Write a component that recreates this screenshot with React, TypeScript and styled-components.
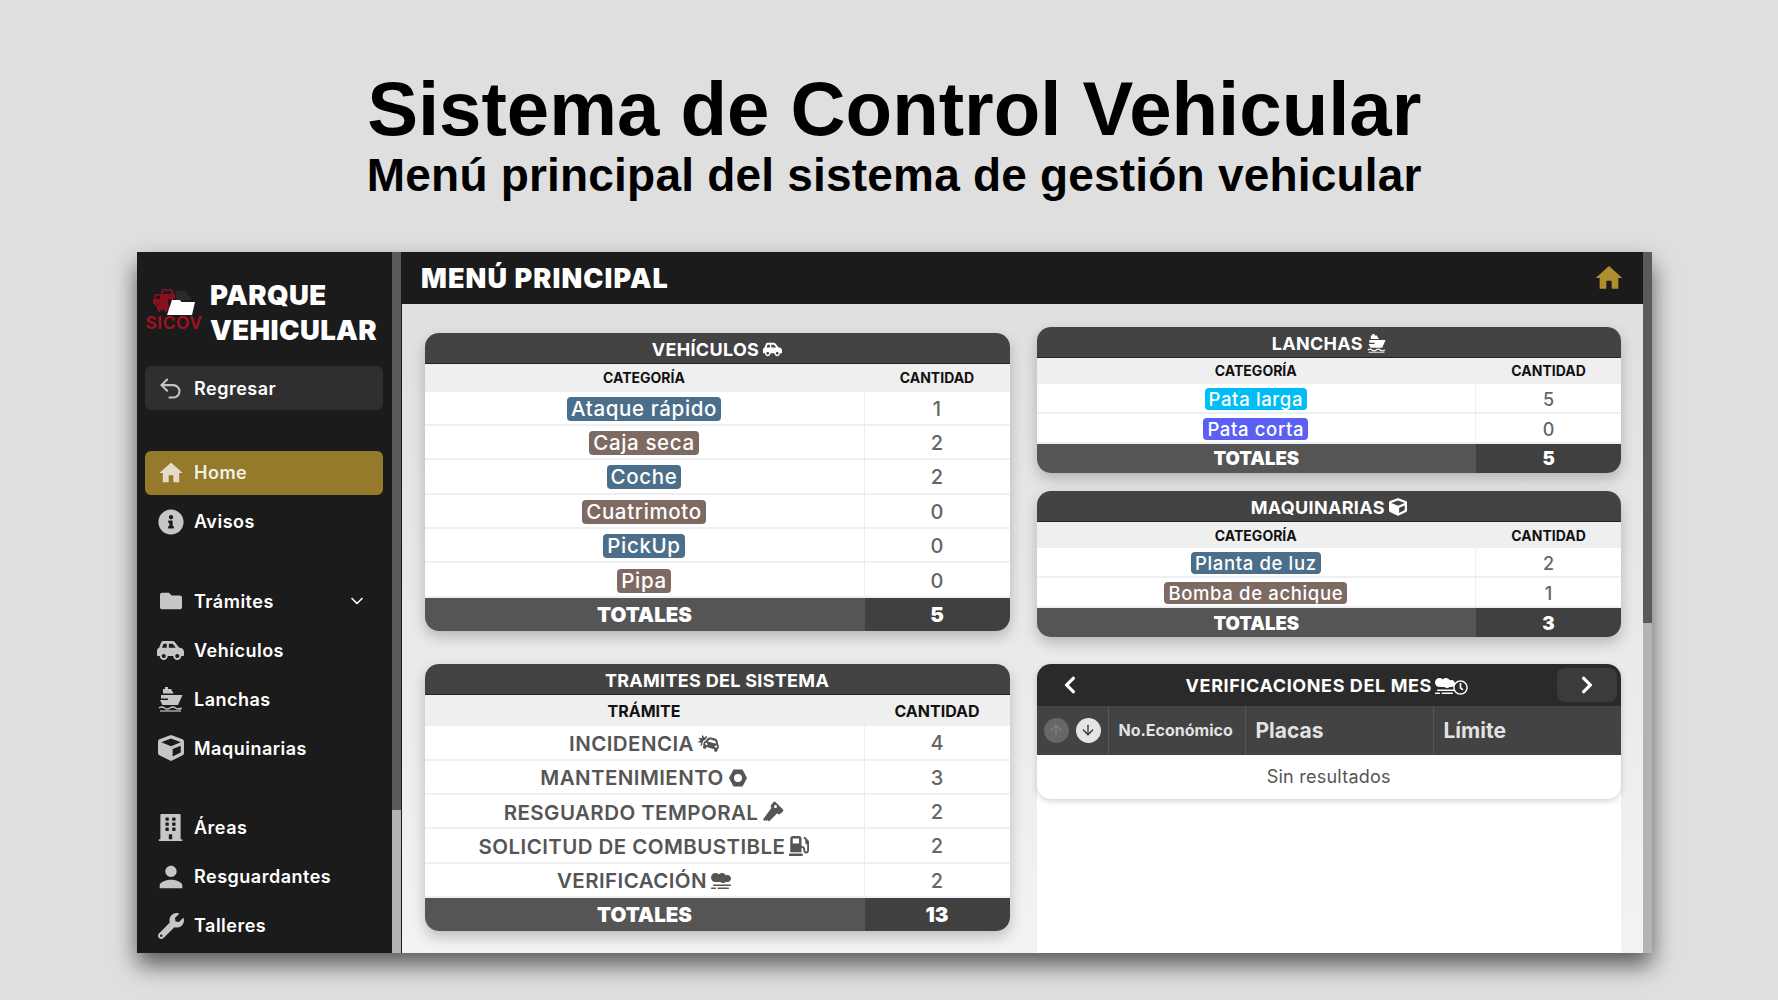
import React from "react";
import styled, { createGlobalStyle } from "styled-components";
import { FaInfoCircle, FaFolder, FaCarSide, FaCube, FaBuilding, FaWrench, FaCarCrash, FaGasPump, FaSmog, FaRegClock, FaChevronLeft, FaChevronRight } from "react-icons/fa";
import { MdHome, MdPerson } from "react-icons/md";
import { Undo2, ChevronDown, ArrowUp, ArrowDown } from "lucide-react";

const Global = createGlobalStyle`
  html, body { margin: 0; padding: 0; background: #dfdfdf; }
  body { font-family: "Inter", "Liberation Sans", sans-serif; overflow: hidden; }
  svg { flex: none; }
`;

const Page = styled.div`
  width: 1778px;
  height: 1000px;
  box-sizing: border-box;
  padding: 0 126px 0 136.5px;
  display: flex;
  flex-direction: column;
`;

const Hero = styled.header`
  height: 252px;
  display: flex;
  flex-direction: column;
  align-items: center;
  padding-top: 67px;
  box-sizing: border-box;
  font-family: "Liberation Sans", Arial, sans-serif;
  font-weight: 700;
  color: #000;
`;
const HeroTitle = styled.h1`
  margin: 0;
  font-size: 76.2px;
  line-height: 84px;
  font-weight: 700;
`;
const HeroSub = styled.h2`
  margin: -2px 0 0;
  font-size: 46px;
  line-height: 52px;
  font-weight: 700;
  letter-spacing: 0.2px;
`;

const Frame = styled.div`
  height: 701px;
  display: flex;
  background: #1b1b1b;
  box-shadow: 0 12px 22px rgba(0, 0, 0, 0.6);
  overflow: hidden;
`;

const Sidebar = styled.aside`
  width: 255px;
  flex: none;
  box-sizing: border-box;
  padding: 24px 8.5px 0;
  color: #fff;
  display: flex;
  flex-direction: column;
`;
const Brand = styled.div`
  display: flex;
  align-items: center;
  gap: 7px;
  height: 74px;
  margin-bottom: 16px;
`;
const Logo = styled.div`
  width: 58px;
  display: flex;
  flex-direction: column;
  align-items: center;
  margin-bottom: 8px;
`;
const LogoText = styled.span`
  font-size: 17.5px;
  line-height: 15px;
  font-weight: 600;
  letter-spacing: 0.5px;
  color: #a80f20;
`;
const BrandName = styled.div`
  font-size: 27.5px;
  line-height: 35.5px;
  font-weight: 900;
  letter-spacing: 0.4px;
`;
const NavGroup = styled.nav<{ $gap: number }>`
  display: flex;
  flex-direction: column;
  gap: 5px;
  margin-bottom: ${(p) => p.$gap}px;
`;
const NavItem = styled.div<{ $variant?: "back" | "active" }>`
  height: 44px;
  box-sizing: border-box;
  padding: 0 16px 0 12px;
  border-radius: 6px;
  display: flex;
  align-items: center;
  gap: 10px;
  font-size: 18px;
  font-weight: 600;
  letter-spacing: 0.5px;
  color: ${(p) => (p.$variant === "active" ? "#f1efe8" : "#fff")};
  background: ${(p) => (p.$variant === "active" ? "#957a2b" : p.$variant === "back" ? "#2f2f2f" : "transparent")};
`;
const NavIcon = styled.span<{ $tint?: string }>`
  width: 27px;
  height: 27px;
  flex: none;
  display: flex;
  align-items: center;
  justify-content: center;
  color: ${(p) => p.$tint || "#c6c6c6"};
`;
const NavLabel = styled.span`
  flex: 1;
`;

const ScrollTrack = styled.div<{ $thumb: number; $w: number }>`
  width: ${(p) => p.$w}px;
  flex: none;
  display: flex;
  flex-direction: column;
  background: #b3b3b3;
  &::before {
    content: "";
    display: block;
    height: ${(p) => p.$thumb}px;
    background: #5a5a5a;
  }
`;

const Main = styled.main`
  flex: 1;
  min-width: 0;
  margin-left: 1px;
  display: flex;
  flex-direction: column;
  background: linear-gradient(#dedede, #f3f3f3);
`;
const TopBar = styled.div`
  height: 52px;
  flex: none;
  background: #1b1b1b;
  color: #fff;
  display: flex;
  align-items: center;
  justify-content: space-between;
  padding: 0 18px 0 19px;
`;
const TopTitle = styled.h3`
  margin: 0;
  font-size: 27px;
  font-weight: 900;
  letter-spacing: 1.1px;
`;
const Columns = styled.div`
  flex: 1;
  min-height: 0;
  display: grid;
  grid-template-columns: 585px 584.5px;
  column-gap: 27px;
  padding: 0 22px 0 22.5px;
`;
const Column = styled.div<{ $top: number }>`
  display: flex;
  flex-direction: column;
  padding-top: ${(p) => p.$top}px;
  min-height: 0;
`;

const Card = styled.section<{ $after: number }>`
  border-radius: 14px;
  overflow: hidden;
  background: #fff;
  box-shadow: 0 6px 14px rgba(0, 0, 0, 0.22);
  margin-bottom: ${(p) => p.$after}px;
  flex: none;
`;
const CardTitle = styled.div<{ $h: number }>`
  height: ${(p) => p.$h}px;
  box-sizing: border-box;
  padding-top: 2px;
  background: #434343;
  color: #fff;
  display: flex;
  align-items: center;
  justify-content: center;
  gap: 4px;
  font-size: 18px;
  font-weight: 700;
  letter-spacing: 0.3px;
  box-shadow: inset 0 -1px 0 #222;
`;
const Row = styled.div<{ $h: number }>`
  height: ${(p) => p.$h}px;
  display: grid;
  grid-template-columns: 440fr 145fr;
`;
const Cell = styled.div`
  display: flex;
  align-items: center;
  justify-content: center;
  gap: 4px;
  padding-top: 2px;
  border-bottom: 2px solid #eef0f4;
  box-sizing: border-box;
  &:first-child {
    border-right: 1px solid #eceef2;
  }
`;
const HeadCell = styled(Cell)<{ $size: number }>`
  background: #efefef;
  color: #111;
  font-weight: 700;
  font-size: ${(p) => p.$size}px;
  padding-top: 0;
  border-bottom: 0;
`;
const Count = styled(Cell)<{ $size: number }>`
  color: #666;
  font-size: ${(p) => p.$size}px;
  font-weight: 500;
`;
const NameCell = styled(Cell)`
  color: #555;
  font-size: 20.5px;
  font-weight: 600;
  letter-spacing: 0.43px;
`;
const Badge = styled.span<{ $bg: string; $size: number; $pad: number }>`
  background: ${(p) => p.$bg};
  color: #fff;
  border-radius: 4px;
  padding: 0 ${(p) => p.$pad}px;
  font-size: ${(p) => p.$size}px;
  font-weight: 500;
  letter-spacing: 0.65px;
  line-height: ${(p) => p.$size + 3.5}px;
`;
const TotalRow = styled.div<{ $h: number; $size: number }>`
  height: ${(p) => p.$h}px;
  display: grid;
  grid-template-columns: 440fr 145fr;
  color: #fff;
  font-weight: 900;
  font-size: ${(p) => p.$size}px;
  box-shadow: inset 0 1px 0 #2a2a2a;
`;
const TotalLabel = styled.div`
  background: #555;
  display: flex;
  align-items: center;
  justify-content: center;
`;
const TotalValue = styled(TotalLabel)`
  background: #404040;
`;

const VerifWrap = styled.div`
  flex: 1;
  min-height: 0;
  background: #fff;
  border-radius: 14px 14px 0 0;
`;
const VerifCard = styled.section`
  border-radius: 14px;
  overflow: hidden;
  background: #fff;
  box-shadow: 0 2px 6px rgba(0, 0, 0, 0.18);
`;
const VerifTop = styled.div`
  height: 42px;
  background: #2a2a2a;
  color: #fff;
  display: flex;
  align-items: center;
  padding: 0 4px 0 24px;
`;
const VerifTitle = styled.div`
  flex: 1;
  display: flex;
  align-items: center;
  justify-content: center;
  gap: 3px;
  font-size: 18px;
  font-weight: 700;
  letter-spacing: 0.6px;
  padding: 2px 0 0 18px;
`;
const ClockMark = styled.span`
  display: flex;
  margin: 4px 0 0 -5px;
`;
const PagerButton = styled.button<{ $filled?: boolean }>`
  width: ${(p) => (p.$filled ? 60 : 18)}px;
  height: 34px;
  padding: 0;
  border: 0;
  border-radius: 8px;
  color: #fff;
  background: ${(p) => (p.$filled ? "#3b3b3b" : "transparent")};
  display: flex;
  align-items: center;
  justify-content: center;
`;
const VerifHead = styled.div`
  height: 49px;
  display: grid;
  grid-template-columns: 72px 137px 188px 1fr;
  background: #434343;
  color: #e2e2e2;
`;
const VerifCol = styled.div<{ $size: number }>`
  display: flex;
  align-items: center;
  padding-left: 10px;
  font-size: ${(p) => p.$size}px;
  font-weight: 700;
  border-right: 1px solid #575757;
  &:last-child {
    border-right: 0;
  }
`;
const SortCol = styled(VerifCol)`
  padding-left: 7px;
  gap: 7px;
`;
const SortDot = styled.span<{ $on?: boolean }>`
  width: 25px;
  height: 25px;
  border-radius: 50%;
  display: flex;
  align-items: center;
  justify-content: center;
  background: ${(p) => (p.$on ? "#e4e4e4" : "#676767")};
  color: ${(p) => (p.$on ? "#333" : "#808080")};
`;
const Empty = styled.div`
  height: 44px;
  display: flex;
  align-items: center;
  justify-content: center;
  color: #555;
  font-size: 18px;
  letter-spacing: 0.25px;
`;

const SicovMark = () => (
  <svg width="44" height="27" viewBox="0 0 44 27" aria-hidden="true">
    <path d="M24 3h10l2 5 3 1v3H24z" fill="#2a2a2a" />
    <g fill="#8a1020">
      <path d="M10 1h10l2 5h1v5h-2v2h-2v-2h-7v2h-2v-2H8V6h1zm1.500 1.500L10.500 6h9l-1-3.500z" />
      <path d="M3 6h10l2 5h1v5h-2v2h-2v-2H5v2H3v-2H1v-5h1zm1.500 1.500L3.500 11h9l-1-3.500z" />
      <path d="M7 14h8l2 4v4h-2v2h-2v-2H8v2H6v-2H5v-4z" />
    </g>
    <path d="M20 12h8l1.500 2H43l-3 13H15z" fill="#fff" />
  </svg>
);

const NutIcon = () => (
  <svg width="20" height="20" viewBox="0 0 20 20" aria-hidden="true">
    <path fillRule="evenodd" fill="#555" d="M5.500 1.500h9L19 10l-4.500 8.500h-9L1 10zM10 6a4 4 0 1 0 0 8 4 4 0 0 0 0-8z" />
  </svg>
);

const KeyIcon = () => (
  <svg width="22" height="22" viewBox="0 0 22 22" aria-hidden="true">
    <path
      fillRule="evenodd"
      fill="#555"
      d="M13.500 1 21 8.500a1.500 1.500 0 0 1 0 2L18 13a1.500 1.500 0 0 1-2 0l-.8-.8L7 20.500 5.500 19l-1 1-1-1-1 1L1 18.500 9.500 6.800 9 6.300a1.500 1.500 0 0 1 0-2L11.500 1a1.500 1.500 0 0 1 2 0zM13.500 4a1.500 1.500 0 1 0 0 3 1.500 1.500 0 0 0 0-3z"
    />
  </svg>
);

const BoatIcon = ({ size }: { size: number }) => (
  <svg width={size} height={size} viewBox="0 0 25 25" fill="currentColor" aria-hidden="true">
    <path d="M7 0h3v2h3l2.500 4.500H5V2h2z" />
    <path d="M3 8h21.500L20 18H4.500L2 13h8v-1.500H3z" />
    <path d="M1 21c2-1.600 3.500-1.600 5.500 0s3.500 1.600 5.500 0 3.500-1.600 5.500 0 3.500 1.600 6 0" fill="none" stroke="currentColor" strokeWidth="1.500" />
    <path d="M2 24h21" fill="none" stroke="currentColor" strokeWidth="1.200" />
  </svg>
);

const vehicles: [string, string, number][] = [
  ["Ataque rápido", "#4b6f8b", 1],
  ["Caja seca", "#7d6a63", 2],
  ["Coche", "#4b6f8b", 2],
  ["Cuatrimoto", "#7d6a63", 0],
  ["PickUp", "#4b6f8b", 0],
  ["Pipa", "#7d6a63", 0],
];

const tramites: [string, React.ReactNode, number][] = [
  ["INCIDENCIA", <FaCarCrash size={21} />, 4],
  ["MANTENIMIENTO", <NutIcon />, 3],
  ["RESGUARDO TEMPORAL", <KeyIcon />, 2],
  ["SOLICITUD DE COMBUSTIBLE", <FaGasPump size={20} />, 2],
  ["VERIFICACIÓN", <FaSmog size={20} />, 2],
];

const SmallTable = ({ title, icon, rows, total, after }: { title: string; icon: React.ReactNode; rows: [string, string, number][]; total: number; after: number }) => (
  <Card $after={after}>
    <CardTitle $h={31}>{title} {icon}</CardTitle>
    <Row $h={26.5}>
      <HeadCell $size={14}>CATEGORÍA</HeadCell>
      <HeadCell $size={14}>CANTIDAD</HeadCell>
    </Row>
    {rows.map(([name, bg, n]) => (
      <Row $h={30} key={name}>
        <Cell><Badge $bg={bg} $size={18.5} $pad={4}>{name}</Badge></Cell>
        <Count $size={18}>{n}</Count>
      </Row>
    ))}
    <TotalRow $h={28.5} $size={18.5}>
      <TotalLabel>TOTALES</TotalLabel>
      <TotalValue>{total}</TotalValue>
    </TotalRow>
  </Card>
);

export default function App() {
  return (
    <Page>
      <Global />
      <Hero>
        <HeroTitle>Sistema de Control Vehicular</HeroTitle>
        <HeroSub>Menú principal del sistema de gestión vehicular</HeroSub>
      </Hero>
      <Frame>
        <Sidebar>
          <Brand>
            <Logo>
              <SicovMark />
              <LogoText>SICOV</LogoText>
            </Logo>
            <BrandName>PARQUE<br />VEHICULAR</BrandName>
          </Brand>
          <NavGroup $gap={40.5}>
            <NavItem $variant="back">
              <NavIcon><Undo2 size={27} strokeWidth={1.8} /></NavIcon>
              <NavLabel>Regresar</NavLabel>
            </NavItem>
          </NavGroup>
          <NavGroup $gap={35.5}>
            <NavItem $variant="active">
              <NavIcon $tint="#e3dcc6"><MdHome size={28} /></NavIcon>
              <NavLabel>Home</NavLabel>
            </NavItem>
            <NavItem>
              <NavIcon><FaInfoCircle size={26} /></NavIcon>
              <NavLabel>Avisos</NavLabel>
            </NavItem>
          </NavGroup>
          <NavGroup $gap={35.5}>
            <NavItem>
              <NavIcon><FaFolder size={22} /></NavIcon>
              <NavLabel>Trámites</NavLabel>
              <ChevronDown size={20} strokeWidth={2} />
            </NavItem>
            <NavItem>
              <NavIcon><FaCarSide size={27} /></NavIcon>
              <NavLabel>Vehículos</NavLabel>
            </NavItem>
            <NavItem>
              <NavIcon><BoatIcon size={25} /></NavIcon>
              <NavLabel>Lanchas</NavLabel>
            </NavItem>
            <NavItem>
              <NavIcon><FaCube size={26} /></NavIcon>
              <NavLabel>Maquinarias</NavLabel>
            </NavItem>
          </NavGroup>
          <NavGroup $gap={0}>
            <NavItem>
              <NavIcon><FaBuilding size={27} /></NavIcon>
              <NavLabel>Áreas</NavLabel>
            </NavItem>
            <NavItem>
              <NavIcon><MdPerson size={34} /></NavIcon>
              <NavLabel>Resguardantes</NavLabel>
            </NavItem>
            <NavItem>
              <NavIcon><FaWrench size={26} /></NavIcon>
              <NavLabel>Talleres</NavLabel>
            </NavItem>
          </NavGroup>
        </Sidebar>
        <ScrollTrack $thumb={558} $w={9.5} />
        <Main>
          <TopBar>
            <TopTitle>MENÚ PRINCIPAL</TopTitle>
            <MdHome size={32} color="#b08e30" />
          </TopBar>
          <Columns>
            <Column $top={29}>
              <Card $after={33}>
                <CardTitle $h={31}>VEHÍCULOS <FaCarSide size={19} /></CardTitle>
                <Row $h={27.5}>
                  <HeadCell $size={14}>CATEGORÍA</HeadCell>
                  <HeadCell $size={14}>CANTIDAD</HeadCell>
                </Row>
                {vehicles.map(([name, bg, n]) => (
                  <Row $h={34.4} key={name}>
                    <Cell><Badge $bg={bg} $size={20.5} $pad={4}>{name}</Badge></Cell>
                    <Count $size={20}>{n}</Count>
                  </Row>
                ))}
                <TotalRow $h={33} $size={20.5}>
                  <TotalLabel>TOTALES</TotalLabel>
                  <TotalValue>5</TotalValue>
                </TotalRow>
              </Card>
              <Card $after={0}>
                <CardTitle $h={31}>TRAMITES DEL SISTEMA</CardTitle>
                <Row $h={31.5}>
                  <HeadCell $size={16}>TRÁMITE</HeadCell>
                  <HeadCell $size={16}>CANTIDAD</HeadCell>
                </Row>
                {tramites.map(([name, icon, n]) => (
                  <Row $h={34.3} key={name}>
                    <NameCell>{name} {icon}</NameCell>
                    <Count $size={20}>{n}</Count>
                  </Row>
                ))}
                <TotalRow $h={33.5} $size={20.5}>
                  <TotalLabel>TOTALES</TotalLabel>
                  <TotalValue>13</TotalValue>
                </TotalRow>
              </Card>
            </Column>
            <Column $top={22.7}>
              <SmallTable
                title="LANCHAS"
                icon={<BoatIcon size={19} />}
                rows={[["Pata larga", "#00bdf5", 5], ["Pata corta", "#5b60f2", 0]]}
                total={5}
                after={18.3}
              />
              <SmallTable
                title="MAQUINARIAS"
                icon={<FaCube size={18} />}
                rows={[["Planta de luz", "#4b6f8b", 2], ["Bomba de achique", "#7d6a63", 1]]}
                total={3}
                after={27}
              />
              <VerifWrap>
                <VerifCard>
                  <VerifTop>
                    <PagerButton type="button" aria-label="Anterior"><FaChevronLeft size={20} /></PagerButton>
                    <VerifTitle>
                      VERIFICACIONES DEL MES <FaSmog size={20} />
                      <ClockMark><FaRegClock size={15} /></ClockMark>
                    </VerifTitle>
                    <PagerButton type="button" $filled aria-label="Siguiente"><FaChevronRight size={20} /></PagerButton>
                  </VerifTop>
                  <VerifHead>
                    <SortCol $size={16}>
                      <SortDot><ArrowUp size={16} /></SortDot>
                      <SortDot $on><ArrowDown size={16} /></SortDot>
                    </SortCol>
                    <VerifCol $size={16}>No.Económico</VerifCol>
                    <VerifCol $size={21}>Placas</VerifCol>
                    <VerifCol $size={21}>Límite</VerifCol>
                  </VerifHead>
                  <Empty>Sin resultados</Empty>
                </VerifCard>
              </VerifWrap>
            </Column>
          </Columns>
        </Main>
        <ScrollTrack $thumb={371} $w={9.5} />
      </Frame>
    </Page>
  );
}
